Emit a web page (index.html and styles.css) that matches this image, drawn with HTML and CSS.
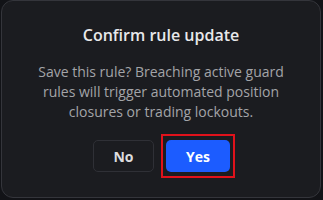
FILE: index.html
```html
<!DOCTYPE html>
<html>
<head>
<meta charset="utf-8">
<link rel="stylesheet" href="styles.css">
</head>
<body>
<div class="dialog">
  <h2 class="title">Confirm rule update</h2>
  <p class="message">Save this rule? Breaching active guard rules will trigger automated position closures or trading lockouts.</p>
  <div class="actions">
    <button class="btn btn-no">No</button>
    <span class="highlight"><button class="btn btn-yes">Yes</button></span>
  </div>
</div>
</body>
</html>
```

FILE: styles.css
```css
html, body {
  margin: 0;
  padding: 0;
  background: #121317;
  width: 323px;
  height: 200px;
  overflow: hidden;
}
body {
  font-family: "Open Sans", "Noto Sans", sans-serif;
  padding: 0 2px 0 1px;
  box-sizing: border-box;
}
.dialog {
  box-sizing: border-box;
  width: 320px;
  height: 198px;
  background: #1b1c20;
  border: 1px solid #34353b;
  border-radius: 12px;
  padding: 22px 20px 0;
  display: flex;
  flex-direction: column;
  align-items: center;
}
.title {
  margin: 0;
  font-size: 16px;
  font-weight: 600;
  line-height: 24px;
  color: #e8e8ea;
}
.message {
  margin: 15px 0 0;
  max-width: 258px;
  font-size: 14px;
  line-height: 20px;
  color: #a3a4a8;
  text-align: center;
}
.actions {
  margin-top: 12px;
  margin-left: 6px;
  display: flex;
  align-items: center;
  gap: 7px;
}
.btn {
  font-family: inherit;
  font-size: 14px;
  font-weight: 700;
  border-radius: 5px;
  height: 32px;
  cursor: pointer;
}
.btn-no {
  width: 61px;
  background: #1b1c20;
  border: 1px solid #2f3036;
  color: #dcdcde;
}
.btn-yes {
  width: 64px;
  background: #1c5cff;
  border: none;
  color: #ffffff;
}
.highlight {
  display: flex;
  padding: 4px 3px;
  border: 2px solid #e0121b;
}
```
